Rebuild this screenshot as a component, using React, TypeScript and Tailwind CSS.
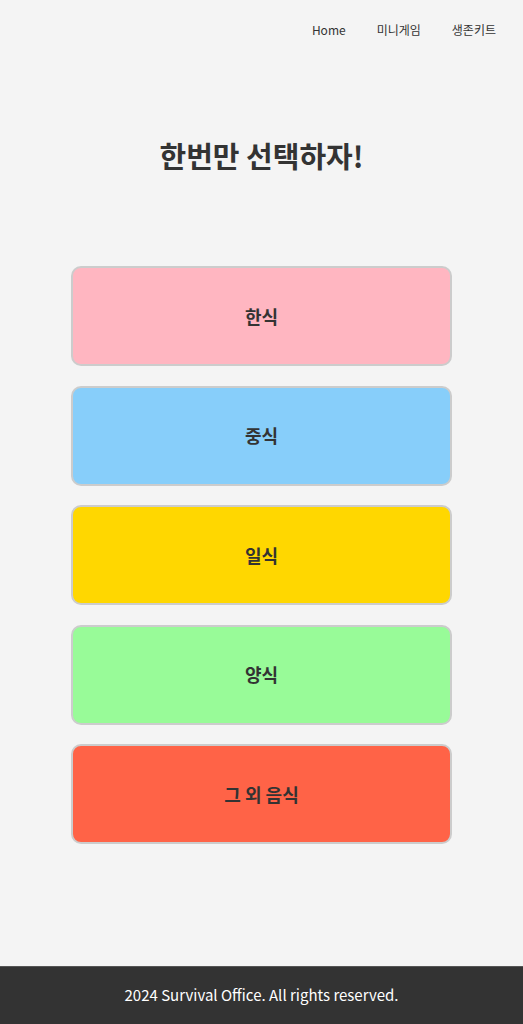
import React from 'react';

const font = { fontFamily: '"Noto Sans CJK KR", "Noto Sans", sans-serif' };

const choices = [
  { label: '한식', color: 'bg-[#ffb6c1]' },
  { label: '중식', color: 'bg-[#87cefa]' },
  { label: '일식', color: 'bg-[#ffd700]' },
  { label: '양식', color: 'bg-[#98fb98]' },
  { label: '그 외 음식', color: 'bg-[#ff6347]' },
];

export default function App() {
  return (
    <div className="min-h-screen flex flex-col bg-[#f4f4f4] text-[#333]" style={font}>
      <header className="flex justify-end px-[27px] pt-[20px]">
        <nav className="flex gap-[31px] text-[12px] leading-[20px] text-[#333]">
          <a href="#">Home</a>
          <a href="#">미니게임</a>
          <a href="#">생존키트</a>
        </nav>
      </header>

      <main className="flex-1 flex flex-col items-center">
        <h1 className="mt-[93px] text-[29px] font-bold leading-[44px] text-[#333]">한번만 선택하자!</h1>

        <div className="mt-[89px] w-[381px] flex flex-col gap-[19.5px]">
          {choices.map((c) => (
            <button
              key={c.label}
              className={`${c.color} h-[100px] w-full rounded-[10px] border-2 border-[#ccc] text-[18px] font-bold text-[#333]`}
            >
              {c.label}
            </button>
          ))}
        </div>
      </main>

      <footer className="h-[58px] flex items-center justify-center bg-[#333] text-[15px] text-white border-t border-[#555]">
        2024 Survival Office. All rights reserved.
      </footer>
    </div>
  );
}
